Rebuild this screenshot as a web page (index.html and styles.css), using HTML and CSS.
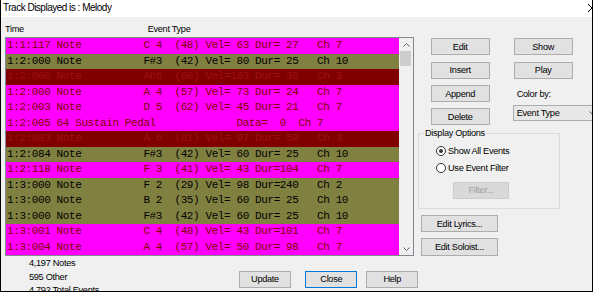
FILE: index.html
```html
<!DOCTYPE html>
<html lang="en">
<head>
    <meta charset="UTF-8">
    <title>Track Displayed is : Melody</title>
    <link rel="stylesheet" href="styles.css">
</head>
<body>
    <div class="window">
        <div class="titlebar">
            <span>Track Displayed is : Melody</span>
            <svg class="close" width="8" height="8" viewBox="0 0 8 8"><path d="M0 0L8 8M8 0L0 8" stroke="#000" stroke-width="1"/></svg>
        </div>
        <div class="dialog">
            <div class="main">
                <div class="events">
                    <div class="cols"><span class="col-time">Time</span><span>Event Type</span></div>
                    <div class="listbox">
                        <div class="rows">
<div class="row pink">1:1:117 Note          C 4  (48) Vel= 63 Dur= 27   Ch 7</div>
<div class="row olive">1:2:000 Note          F#3  (42) Vel= 80 Dur= 25   Ch 10</div>
<div class="row maroon">1:2:000 Note          Ab6  (80) Vel=103 Dur= 38   Ch 3</div>
<div class="row pink">1:2:000 Note          A 4  (57) Vel= 73 Dur= 24   Ch 7</div>
<div class="row pink">1:2:003 Note          D 5  (62) Vel= 45 Dur= 21   Ch 7</div>
<div class="row pink">1:2:005 64 Sustain Pedal             Data=  0  Ch 7</div>
<div class="row maroon">1:2:083 Note          A 6  (81) Vel= 97 Dur= 59   Ch 3</div>
<div class="row olive">1:2:084 Note          F#3  (42) Vel= 60 Dur= 25   Ch 10</div>
<div class="row pink">1:2:118 Note          F 3  (41) Vel= 43 Dur=104   Ch 7</div>
<div class="row olive">1:3:000 Note          F 2  (29) Vel= 98 Dur=240   Ch 2</div>
<div class="row olive">1:3:000 Note          B 2  (35) Vel= 60 Dur= 25   Ch 10</div>
<div class="row olive">1:3:000 Note          F#3  (42) Vel= 60 Dur= 25   Ch 10</div>
<div class="row pink">1:3:001 Note          C 4  (48) Vel= 43 Dur=101   Ch 7</div>
<div class="row pink">1:3:004 Note          A 4  (57) Vel= 50 Dur= 98   Ch 7</div>
                        </div>
                        <div class="scrollbar">
                            <div class="arrow"><svg width="7" height="4" viewBox="0 0 7 4"><polyline points="0.5,3.5 3.5,0.5 6.5,3.5" fill="none" stroke="#606060"/></svg></div>
                            <div class="thumb"></div>
                            <div class="track"></div>
                            <div class="arrow"><svg width="7" height="4" viewBox="0 0 7 4"><polyline points="0.5,0.5 3.5,3.5 6.5,0.5" fill="none" stroke="#606060"/></svg></div>
                        </div>
                    </div>
                </div>
                <div class="side">
                    <div class="btn-grid">
                        <button class="btn">Edit</button>
                        <button class="btn">Show</button>
                        <button class="btn">Insert</button>
                        <button class="btn">Play</button>
                        <button class="btn">Append</button>
                        <span class="color-label">Color by:</span>
                        <button class="btn">Delete</button>
                        <div class="combo">
                            <span>Event Type</span>
                            <svg width="7" height="4" viewBox="0 0 7 4"><polyline points="0.5,0.5 3.5,3.5 6.5,0.5" fill="none" stroke="#606060"/></svg>
                        </div>
                    </div>
                    <fieldset class="options">
                        <legend>Display Options</legend>
                        <div class="radio"><span class="dot checked"></span>Show All Events</div>
                        <div class="radio"><span class="dot"></span>Use Event Filter</div>
                        <button class="btn filter" disabled>Filter...</button>
                    </fieldset>
                    <button class="btn wide">Edit Lyrics...</button>
                    <button class="btn wide second">Edit Soloist...</button>
                </div>
            </div>
            <div class="footer">
                <div class="stats">
                    <div>4,197 Notes</div>
                    <div>595 Other</div>
                    <div>4,792 Total Events</div>
                </div>
                <div class="actions">
                    <button class="btn">Update</button>
                    <button class="btn default">Close</button>
                    <button class="btn help">Help</button>
                </div>
            </div>
        </div>
    </div>
</body>
</html>
```

FILE: styles.css
```css
body {
    margin: 0;
    font-family: "Liberation Sans", Arial, sans-serif;
    font-size: 9.2px;
    letter-spacing: -0.3px;
    color: #000;
    background: #fff;
}
.window {
    width: 591px;
    height: 291px;
    border-left: 1px solid #000;
    border-right: 1px solid #000;
    border-bottom: 1px solid #000;
    background: #f0f0f0;
    overflow: hidden;
}
.titlebar {
    height: 17px;
    background: #fff;
    display: flex;
    justify-content: space-between;
    align-items: center;
    padding-left: 2px;
    font-size: 10px;
    letter-spacing: -0.5px;
    line-height: 14px;
    overflow: hidden;
}
.titlebar span {
    margin-top: -2px;
}
.close {
    margin-right: -4px;
    margin-top: -2px;
    flex: none;
}
.dialog {
    padding-left: 4px;
}
.main {
    display: flex;
    height: 239px;
}
.events {
    width: 409px;
    flex: none;
}
.cols {
    display: flex;
    height: 20px;
    padding-top: 4px;
    box-sizing: border-box;
    line-height: 16px;
}
.col-time {
    width: 142.7px;
}
.listbox {
    display: flex;
    height: 217px;
    border: 1px solid #828790;
}
.rows {
    width: 393px;
    background: #fff;
}
.row {
    height: 15.5px;
    line-height: 15.5px;
    padding-left: 1px;
    white-space: pre;
    font-family: "Liberation Mono", "Courier New", monospace;
    font-size: 11px;
    letter-spacing: -0.4px;
}
.pink {
    background: #ff00ff;
    color: #800000;
}
.olive {
    background: #808040;
    color: #000;
}
.maroon {
    background: #800000;
    color: #9c1212;
}
.scrollbar {
    width: 14px;
    background: #f0f0f0;
    display: flex;
    flex-direction: column;
}
.arrow {
    height: 13px;
    display: flex;
    align-items: center;
    justify-content: center;
}
.thumb {
    height: 15px;
    margin: 0 2px 0 1px;
    background: #cdcdcd;
}
.track {
    flex: 1;
}
.side {
    flex: 1;
    padding-left: 4px;
}
.btn {
    box-sizing: border-box;
    margin: 0;
    padding: 0;
    font: inherit;
    letter-spacing: inherit;
    color: #000;
    background: #e1e1e1;
    border: 1px solid #adadad;
    text-align: center;
}
.btn-grid {
    display: grid;
    grid-template-columns: 59px 59px;
    grid-auto-rows: 17px;
    column-gap: 24px;
    row-gap: 6.4px;
    margin: 21.3px 0 0 12.7px;
}
.color-label {
    align-self: center;
    padding-left: 3px;
}
.combo {
    box-sizing: border-box;
    width: 90px;
    height: 16px;
    margin: -3.3px 0 0 -1px;
    display: flex;
    align-items: center;
    justify-content: space-between;
    padding: 0 6px 0 3px;
    background: #e8e8e8;
    border: 1px solid #adadad;
}
.options {
    box-sizing: border-box;
    width: 142px;
    margin: 2px 0 0;
    padding: 1.4px 0 8.7px 5px;
    border: 1px solid #dcdcdc;
}
.options legend {
    padding: 0 1px;
    line-height: 13px;
}
.radio {
    display: flex;
    align-items: center;
    height: 17.6px;
    margin-left: 12px;
}
.dot {
    box-sizing: border-box;
    width: 10px;
    height: 10px;
    margin-right: 2px;
    border: 1px solid #333;
    border-radius: 50%;
    background: #fff;
    display: flex;
    align-items: center;
    justify-content: center;
}
.dot.checked::after {
    content: "";
    width: 4px;
    height: 4px;
    border-radius: 50%;
    background: #333;
}
.filter {
    display: block;
    width: 56px;
    height: 17.6px;
    margin: 4.6px 0 0 29px;
    color: #a0a0a0;
    background: #d9d9d9;
    border-color: #cdcdcd;
}
.wide {
    display: block;
    width: 77px;
    height: 17.3px;
    margin: 6px 0 0 3px;
}
.footer {
    display: flex;
    height: 35px;
}
.stats {
    width: 210px;
    padding: 1.35px 0 0 24px;
    line-height: 13.3px;
}
.actions {
    display: flex;
    align-items: flex-start;
    padding-top: 14.7px;
}
.actions .btn {
    width: 52px;
    height: 17.6px;
}
.actions .default {
    margin-left: 14.3px;
    border-color: #0078d7;
}
.actions .help {
    margin-left: 9px;
}
```
